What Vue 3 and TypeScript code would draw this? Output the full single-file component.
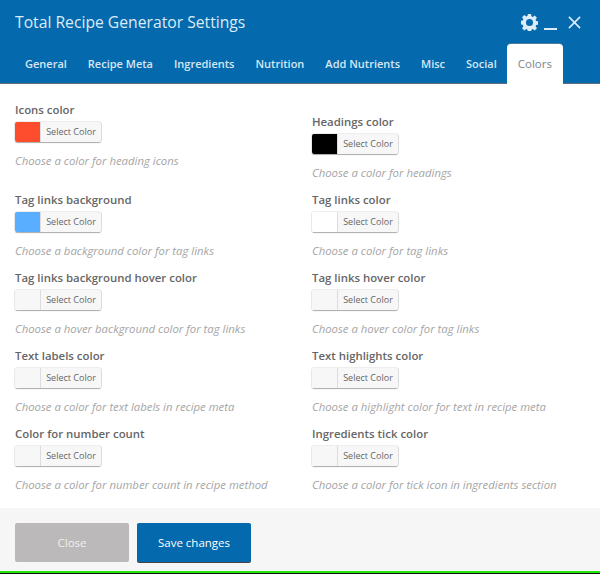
<script setup lang="ts">
const tabs = ["General", "Recipe Meta", "Ingredients", "Nutrition", "Add Nutrients", "Misc", "Social", "Colors"];

const fields = [
  { label: "Icons color", hint: "Choose a color for heading icons", color: "#fe4d2e" },
  { label: "Headings color", hint: "Choose a color for headings", color: "#000000" },
  { label: "Tag links background", hint: "Choose a background color for tag links", color: "#5aaeff" },
  { label: "Tag links color", hint: "Choose a color for tag links", color: "#ffffff" },
  { label: "Tag links background hover color", hint: "Choose a hover background color for tag links", color: "#f7f7f7" },
  { label: "Tag links hover color", hint: "Choose a hover color for tag links", color: "#f7f7f7" },
  { label: "Text labels color", hint: "Choose a color for text labels in recipe meta", color: "#f7f7f7" },
  { label: "Text highlights color", hint: "Choose a highlight color for text in recipe meta", color: "#f7f7f7" },
  { label: "Color for number count", hint: "Choose a color for number count in recipe method", color: "#f7f7f7" },
  { label: "Ingredients tick color", hint: "Choose a color for tick icon in ingredients section", color: "#f7f7f7" },
];
</script>

<template>
  <div class="modal">
    <header class="head">
      <div class="title-row">
        <h1>Total Recipe Generator Settings</h1>
        <div class="actions">
          <svg class="gear" viewBox="0 0 24 24" width="17" height="17">
            <path fill="#dcebf5" fill-rule="evenodd" d="M9.800 0h4.400l.6 3.300 1.800.8 2.800-1.900 3.100 3.100-1.900 2.800.8 1.800 3.300.6v4.400l-3.300.6-.8 1.800 1.900 2.800-3.100 3.100-2.800-1.900-1.800.8-.6 3.300H9.800l-.6-3.300-1.800-.8-2.800 1.900-3.100-3.100 1.900-2.800-.8-1.800L-.7 14.200V9.800l3.300-.6.8-1.800-1.900-2.800 3.100-3.100 2.800 1.900 1.800-.8zM12 7a5 5 0 1 0 0 10 5 5 0 0 0 0-10z" />
          </svg>
          <span class="minimize"></span>
          <svg class="cross" viewBox="0 0 14 14" width="13" height="13">
            <path d="M1 1l12 12M13 1L1 13" stroke="#dcebf5" stroke-width="1.700" fill="none" />
          </svg>
        </div>
      </div>
      <nav class="tabs">
        <a v-for="tab in tabs" :key="tab" class="tab" :class="{ active: tab === 'Colors' }">{{ tab }}</a>
      </nav>
    </header>

    <main class="body">
      <div v-for="(f, i) in fields" :key="f.label" class="field" :class="{ offset: i === 1 }">
        <label>{{ f.label }}</label>
        <div class="picker">
          <span class="swatch" :style="{ background: f.color }"></span>
          <span class="picker-text">Select Color</span>
        </div>
        <p class="hint">{{ f.hint }}</p>
      </div>
    </main>

    <footer class="foot">
      <button class="btn close">Close</button>
      <button class="btn save">Save changes</button>
    </footer>
    <div class="edge"></div>
  </div>
</template>

<style>
html, body { margin: 0; background: #fff; }
</style>

<style scoped>
.modal {
  width: 600px;
  height: 574px;
  display: flex;
  flex-direction: column;
  overflow: hidden;
  font-family: "Open Sans", "Liberation Sans", sans-serif;
  background: #fff;
}

.head {
  height: 84px;
  box-sizing: border-box;
  background: #0569ae;
  border-bottom: 1px solid #5f6f7c;
  display: flex;
  flex-direction: column;
  flex-shrink: 0;
}

.title-row {
  height: 44px;
  display: flex;
  align-items: center;
  justify-content: space-between;
  padding: 0 19px 0 15px;
}

.title-row h1 {
  margin: 0;
  font-size: 15.700px;
  font-weight: 400;
  color: #dcebf5;
}

.actions {
  display: flex;
  align-items: center;
}

.minimize {
  width: 13px;
  height: 2px;
  background: #dcebf5;
  margin: 13px 11px 0 6px;
}

.tabs {
  flex: 1;
  display: flex;
  align-items: flex-end;
  padding-left: 25px;
  gap: 21px;
}

.tab {
  font-size: 11px;
  font-weight: 600;
  color: #d5e7f3;
  line-height: 38px;
}

.tab.active {
  background: #fff;
  color: #7d858b;
  font-weight: 400;
  font-size: 11.500px;
  height: 40px;
  line-height: 40px;
  padding: 0 11px;
  margin-bottom: -1px;
  margin-left: -11px;
  border-radius: 4px 4px 0 0;
  box-shadow: 0 -1px 0 #4d7da0;
}

.body {
  flex: 1;
  display: grid;
  grid-template-columns: 297px 1fr;
  grid-template-rows: 90px repeat(4, 78px);
  padding: 18px 0 0 15px;
}

.field.offset { padding-top: 12px; }

.field label {
  display: block;
  font-size: 11.400px;
  line-height: 16px;
  font-weight: 600;
  color: #666;
}

.picker {
  display: flex;
  width: 86px;
  height: 20px;
  margin-top: 4px;
  border-radius: 2px;
  background: #f7f7f7;
  box-shadow: 1px 0 0 #ddd, -1px 0 0 #e8e8e8, 0 1px 1px #aaa, 0 -1px 0 #eee;
  overflow: hidden;
}

.swatch {
  width: 25px;
  border-right: 1px solid #ddd;
  flex-shrink: 0;
}

.picker-text {
  flex: 1;
  text-align: center;
  font-size: 9px;
  line-height: 20px;
  color: #666;
}

.hint {
  margin: 11px 0 0;
  font-size: 11.350px;
  line-height: 16px;
  font-style: italic;
  color: #a5a5a5;
}

.foot {
  height: 63px;
  box-sizing: border-box;
  background: #f6f6f7;
  display: flex;
  gap: 8px;
  padding: 15px 0 0 15px;
  flex-shrink: 0;
}

.btn {
  width: 114px;
  height: 39px;
  border: 0;
  border-radius: 2px;
  font-family: inherit;
  font-size: 11.500px;
  color: #fff;
  padding: 0;
}

.btn.close { background: #bbb9ba; color: #f0f0f0; }
.btn.save { background: #0569ae; box-shadow: 0 1px 0 #444; }

.edge {
  height: 3px;
  background: #22e60a;
  border-bottom: 1px solid #111;
  box-sizing: border-box;
  flex-shrink: 0;
}
</style>
